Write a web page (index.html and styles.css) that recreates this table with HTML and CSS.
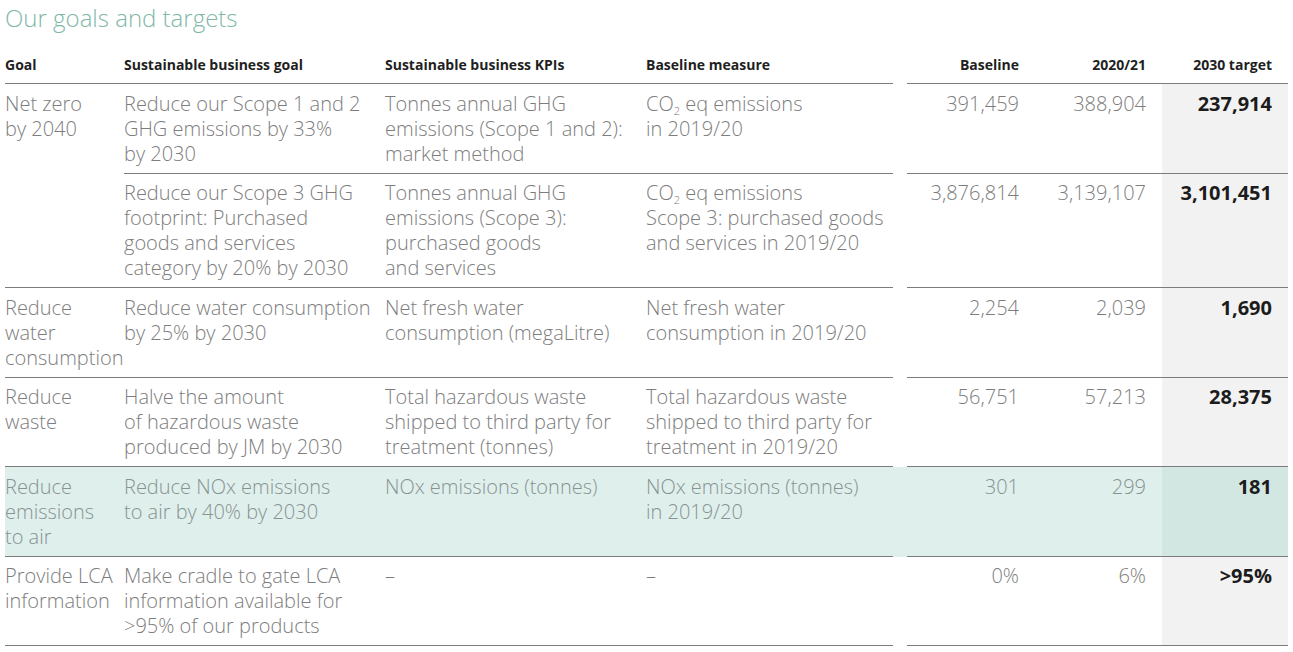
FILE: index.html
```html
<!DOCTYPE html>
<html lang="en">
<head>
<meta charset="utf-8">
<title>Our goals and targets</title>
<link rel="stylesheet" href="styles.css">
</head>
<body>
<div class="page">
  <h1 class="title">Our goals and targets</h1>
  <table class="goals">
    <colgroup>
      <col class="c-goal"><col class="c-sgoal"><col class="c-kpi"><col class="c-measure">
      <col class="c-gap"><col class="c-num"><col class="c-num2"><col class="c-target">
    </colgroup>
    <thead>
      <tr>
        <th>Goal</th>
        <th>Sustainable business goal</th>
        <th>Sustainable business KPIs</th>
        <th>Baseline measure</th>
        <th class="gap"></th>
        <th class="num">Baseline</th>
        <th class="num">2020/21</th>
        <th class="num target-h">2030 target</th>
      </tr>
    </thead>
    <tbody>
      <tr>
        <td rowspan="2">Net zero<br>by 2040</td>
        <td>Reduce our Scope 1 and 2<br>GHG emissions by 33%<br>by 2030</td>
        <td>Tonnes annual GHG<br>emissions (Scope 1 and 2):<br>market method</td>
        <td>CO<sub>2</sub> eq emissions<br>in 2019/20</td>
        <td class="gap"></td>
        <td class="num">391,459</td>
        <td class="num">388,904</td>
        <td class="num target">237,914</td>
      </tr>
      <tr>
        <td>Reduce our Scope 3 GHG<br>footprint: Purchased<br>goods and services<br>category by 20% by 2030</td>
        <td>Tonnes annual GHG<br>emissions (Scope 3):<br>purchased goods<br>and services</td>
        <td>CO<sub>2</sub> eq emissions<br>Scope 3: purchased goods<br>and services in 2019/20</td>
        <td class="gap"></td>
        <td class="num">3,876,814</td>
        <td class="num">3,139,107</td>
        <td class="num target">3,101,451</td>
      </tr>
      <tr>
        <td>Reduce<br>water<br>consumption</td>
        <td>Reduce water consumption<br>by 25% by 2030</td>
        <td>Net fresh water<br>consumption (megaLitre)</td>
        <td>Net fresh water<br>consumption in 2019/20</td>
        <td class="gap"></td>
        <td class="num">2,254</td>
        <td class="num">2,039</td>
        <td class="num target">1,690</td>
      </tr>
      <tr>
        <td>Reduce<br>waste</td>
        <td>Halve the amount<br>of hazardous waste<br>produced by JM by 2030</td>
        <td>Total hazardous waste<br>shipped to third party for<br>treatment (tonnes)</td>
        <td>Total hazardous waste<br>shipped to third party for<br>treatment in 2019/20</td>
        <td class="gap"></td>
        <td class="num">56,751</td>
        <td class="num">57,213</td>
        <td class="num target">28,375</td>
      </tr>
      <tr class="highlight">
        <td>Reduce<br>emissions<br>to air</td>
        <td>Reduce NOx emissions<br>to air by 40% by 2030</td>
        <td>NOx emissions (tonnes)</td>
        <td>NOx emissions (tonnes)<br>in 2019/20</td>
        <td class="gap"></td>
        <td class="num">301</td>
        <td class="num">299</td>
        <td class="num target">181</td>
      </tr>
      <tr>
        <td>Provide LCA<br>information</td>
        <td>Make cradle to gate LCA<br>information available for<br>&gt;95% of our products</td>
        <td>–</td>
        <td>–</td>
        <td class="gap"></td>
        <td class="num">0%</td>
        <td class="num">6%</td>
        <td class="num target">&gt;95%</td>
      </tr>
    </tbody>
  </table>
</div>
</body>
</html>
```

FILE: styles.css
```css
html, body {
  margin: 0;
  padding: 0;
  background: #ffffff;
}

.page {
  padding: 0 5px;
  font-family: "Open Sans", "Noto Sans", "Liberation Sans", sans-serif;
}

.title {
  margin: 0;
  padding-top: 2px;
  font-size: 24px;
  line-height: 32px;
  font-weight: 300;
  color: #7fb8aa;
}

.goals {
  width: 1283px;
  table-layout: fixed;
  border-collapse: separate;
  border-spacing: 0;
}

.c-goal { width: 119px; }
.c-sgoal { width: 261px; }
.c-kpi { width: 261px; }
.c-measure { width: 247px; }
.c-gap { width: 14px; }
.c-num { width: 128px; }
.c-num2 { width: 127px; }
.c-target { width: 126px; }

.goals th {
  text-align: left;
  vertical-align: bottom;
  font-size: 14px;
  line-height: 18px;
  font-weight: 700;
  color: #1f1f1f;
  padding: 22px 0 9px 0;
  border-bottom: 1px solid #7c7c7c;
  white-space: nowrap;
}

.goals td {
  vertical-align: top;
  font-size: 20px;
  line-height: 25px;
  font-weight: 300;
  color: #7d7d7d;
  padding: 6.5px 0 7px 0;
  border-bottom: 1px solid #7c7c7c;
  white-space: nowrap;
}

.goals th.gap,
.goals td.gap {
  border-bottom: none;
  padding: 0;
}

.goals .num {
  text-align: right;
  padding-right: 16px;
}

.goals td.target {
  background: #f2f2f2;
  color: #1c1c1c;
  font-weight: 700;
}

.goals sub {
  font-size: 11px;
  line-height: 0;
  vertical-align: -4px;
}

.highlight td {
  background: #dfefec;
  color: #879391;
}

.highlight td.target {
  background: #d2e6e2;
}
```
